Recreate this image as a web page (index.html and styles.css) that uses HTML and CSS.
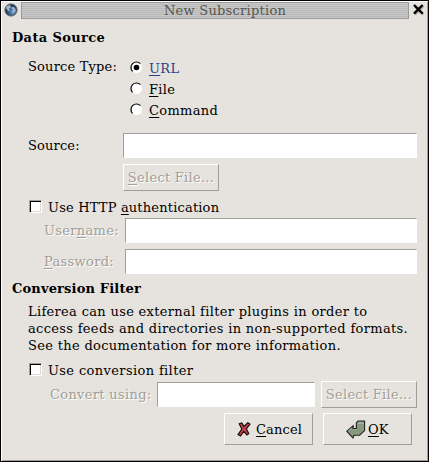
FILE: index.html
```html
<!DOCTYPE html>
<html lang="en">
<head>
<meta charset="utf-8">
<title>New Subscription</title>
<link rel="stylesheet" href="styles.css">
</head>
<body>
<main class="window">
  <header class="titlebar">
    <svg class="globe" width="14" height="14" viewBox="0 0 14 14">
      <defs><radialGradient id="g" cx=".6" cy=".65"><stop offset="0" stop-color="#6c9acb"/><stop offset=".65" stop-color="#34577e"/><stop offset="1" stop-color="#25364c"/></radialGradient></defs>
      <circle cx="7" cy="7" r="6.1" fill="url(#g)" stroke="#59636d" stroke-width="1"/>
      <path d="M3 3l3-1 1 2-2 2 1 2-2 0-2-3z" fill="#9fb6ca"/><path d="M8 4l2 0 2 3-1 2-2 2-1-2 1-2-2-2z" fill="#8fb2d6"/>
    </svg>
    <div class="title">New Subscription</div>
    <svg class="close" width="13" height="13" viewBox="0 0 13 13">
      <path d="M3 3l8.5 8.5M11.5 3l-8.5 8.5" stroke="#b4b1ad" stroke-width="2.5"/>
      <path d="M2 2l8.6 8.6M10.6 2l-8.6 8.6" stroke="#000" stroke-width="2.4"/>
    </svg>
  </header>
  <h2 class="heading">Data Source</h2>
  <div class="types">
    <span class="label">Source Type:</span>
    <div class="radios">
      <div class="radio active"><svg width="13" height="13" viewBox="0 0 13 13"><circle cx="6.5" cy="6.5" r="5.5" fill="#fff"/><path d="M2.6 10.4A5.5 5.5 0 0 1 10.4 2.6" fill="none" stroke="#000" stroke-width="1.2"/><circle cx="6.5" cy="6.5" r="2.8"/></svg><span><u>U</u>RL</span></div>
      <div class="radio"><svg width="13" height="13" viewBox="0 0 13 13"><circle cx="6.5" cy="6.5" r="5.5" fill="#fff"/><path d="M2.6 10.4A5.5 5.5 0 0 1 10.4 2.6" fill="none" stroke="#000" stroke-width="1.2"/></svg><span><u>F</u>ile</span></div>
      <div class="radio"><svg width="13" height="13" viewBox="0 0 13 13"><circle cx="6.5" cy="6.5" r="5.5" fill="#fff"/><path d="M2.6 10.4A5.5 5.5 0 0 1 10.4 2.6" fill="none" stroke="#000" stroke-width="1.2"/></svg><span><u>C</u>ommand</span></div>
    </div>
  </div>
  <div class="field source"><span class="label">Source:</span><div class="entry"></div></div>
  <div class="button select first"><span><u>S</u>elect File...</span></div>
  <div class="check auth"><i class="box"></i><span>Use HTTP <u>a</u>uthentication</span></div>
  <div class="field cred"><span class="label">User<u>n</u>ame:</span><div class="entry"></div></div>
  <div class="field cred pass"><span class="label"><u>P</u>assword:</span><div class="entry"></div></div>
  <h2 class="heading second">Conversion Filter</h2>
  <p class="note">Liferea can use external filter plugins in order to<br>access feeds and directories in non-supported formats.<br>See the documentation for more information.</p>
  <div class="check conv"><i class="box"></i><span>Use conversion filter</span></div>
  <div class="field convert"><span class="label">Convert using:</span><div class="entry"></div><div class="button select"><span>Select File...</span></div></div>
  <footer class="actions">
    <div class="button action"><svg class="cross" width="14" height="16" viewBox="0 0 14 16">
      <path d="M2.2 2.8L4.8 2 7 5.4 10.8 1.8 13 3.2 9.3 7.8 11.8 12.5 9.8 14 6.8 10.4 3.5 15 1 13.6 4.8 8z" fill="#bd3f48" stroke="#160c0c" stroke-width="1.1"/></svg><span><u>C</u>ancel</span></div>
    <div class="button action ok"><svg class="enter" width="20" height="19" viewBox="0 0 20 19">
      <path d="M10.3 2.8L12 1H18.6V10.6L13.6 15.2H8L7 18 .8 11.4 7.2 5.8 7.2 8.6H10.3z" fill="#87987e" stroke="#20251e" stroke-width="1.1"/>
      <path d="M12 3.2H17.6" fill="none" stroke="#c0cbb9" stroke-width=".9"/><path d="M2.2 11.2l4.1-3.7M7.2 9.6h4" fill="none" stroke="#b2c0aa" stroke-width=".8"/></svg><span><u>O</u>K</span></div>
  </footer>
</main>
</body>
</html>
```
FILE: styles.css
```css
* { box-sizing: border-box; }
body {
  margin: 0;
  font: 13px/17px "DejaVu Serif", serif;
  letter-spacing: 0.32px;
  color: #000;
  background: #e6e3de;
}
.window {
  width: 429px;
  height: 462px;
  border: 1px solid #000;
  box-shadow: inset 1px 1px #fff, inset -1px -1px #a09e99;
  overflow: hidden;
  white-space: nowrap;
}
u { text-decoration: underline 1px; text-underline-offset: 2px; text-decoration-skip-ink: none; }
.titlebar { display: flex; height: 20px; padding: 1px 3px 0 3px; }
.globe { margin: 1px 3px 0 0; }
.title {
  width: 388px;
  height: 17px;
  padding-left: 20px;
  border: 1px solid #999b9b;
  background: repeating-linear-gradient(#c9c9c9 0 1px, #b8b8b8 1px 2px);
  color: #55564f;
  letter-spacing: 0.25px;
  text-align: center;
  line-height: 15px;
}
.close { margin: 1px 0 0 3px; }
.heading { margin: 8px 0 0 11px; font-size: 13px; line-height: 17px; font-weight: bold; letter-spacing: 0.35px; }
.types { display: flex; margin: 12px 0 0 27px; height: 63px; }
.label { flex: none; }
.types .label { width: 102px; letter-spacing: 0.18px; }
.radios { padding-top: 2px; }
.radio { display: flex; height: 21px; gap: 6px; }
.radio svg { margin-top: 1px; }
.active { color: #2b4584; }
.field { display: flex; }
.field .label { padding-top: 4px; }
.entry {
  height: 25px;
  flex: none;
  background: #fff;
  border: 1px solid;
  border-color: #a09e99 #fff #fff #a09e99;
}
.source { margin: 12px 0 0 27px; }
.source .label { width: 95px; letter-spacing: 0.15px; }
.source .entry { width: 294px; }
.button {
  display: flex;
  justify-content: center;
  border: 1px solid;
  border-color: #fff #a09e99 #a09e99 #fff;
  letter-spacing: 0.15px;
}
.select { width: 96px; height: 27px; line-height: 25px; letter-spacing: 0.27px; }
.select, .cred .label, .convert .label { color: #a09e99; text-shadow: 1px 1px #fff; }
.first { margin: 6px 0 0 122px; }
.check { display: flex; gap: 6px; margin-left: 28px; }
.box {
  width: 13px;
  height: 13px;
  margin-top: 1px;
  background: #fff;
  border: 1px solid;
  border-color: #a09e99 #fff #fff #a09e99;
  box-shadow: inset 1px 1px #000, inset -1px -1px #dddad5;
}
.auth { margin-top: 8px; letter-spacing: 0.18px; }
.cred { margin: 2px 0 0 43px; }
.cred .label { width: 81px; }
.cred .entry { width: 292px; }
.pass { margin-top: 6px; }
.second { margin-top: 6px; letter-spacing: 0.16px; }
.note { margin: 6px 0 0 27px; }
.conv { margin-top: 8px; letter-spacing: 0.37px; }
.convert { margin: 2px 0 0 49px; }
.convert .label { width: 107px; padding-top: 5px; }
.convert .entry { width: 158px; margin: 1px 6px 0 0; }
.actions { display: flex; gap: 10px; margin: 5px 0 0 223px; }
.action { width: 89px; height: 32px; justify-content: flex-start; line-height: 31px; padding-left: 12px; }
.cross { margin: 7px 5px 0 0; }
.ok { padding-left: 22px; }
.enter { margin: 6px 2px 0 0; }
```
